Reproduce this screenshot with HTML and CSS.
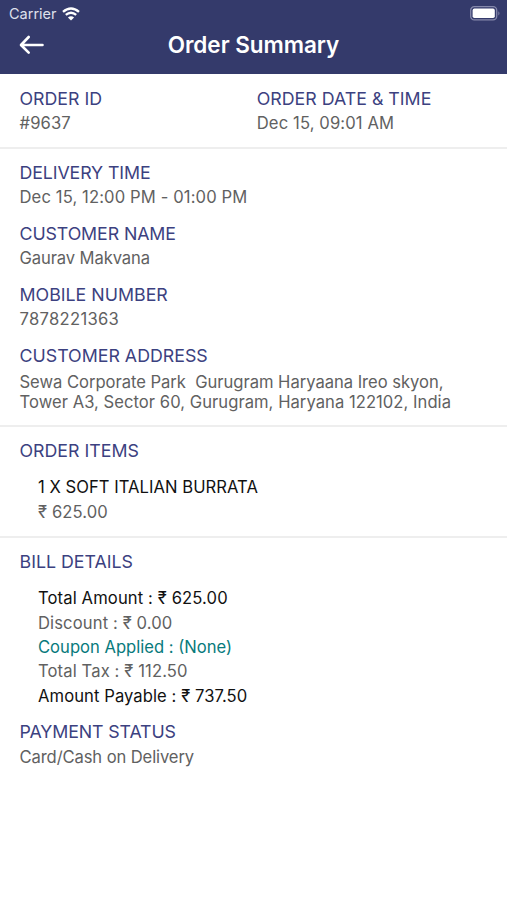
FILE: index.html
```html
<!DOCTYPE html>
<html lang="en">
<head>
<meta charset="utf-8">
<title>Order Summary</title>
<link rel="stylesheet" href="styles.css">
</head>
<body>
<header class="header">
  <div class="status">
    <span class="carrier">Carrier</span>
    <svg class="wifi" width="18" height="14" viewBox="0 0 18 14" fill="none" stroke="#fff" stroke-width="2.3"><path d="M1 4.9Q9-2 17 4.9"/><path d="M3.8 7.9Q9 3.5 14.2 7.9"/><path d="M9 13.5L5.9 10.4Q9 7.9 12.1 10.4Z" fill="#fff" stroke="none"/></svg>
    <svg class="battery" width="31" height="15" viewBox="0 0 31 15"><rect x=".7" y=".7" width="26" height="13.2" rx="3.6" fill="none" stroke="#8588ab" stroke-width="1.3"/><rect x="2.6" y="2.6" width="22.2" height="9.4" rx="1.8" fill="#fff"/><path d="M28.4 5.2Q30.5 7.3 28.4 9.4Z" fill="#8588ab"/></svg>
  </div>
  <div class="nav">
    <svg class="back" width="26" height="20" viewBox="0 0 26 20" fill="none" stroke="#fff" stroke-width="2.6" stroke-linecap="round" stroke-linejoin="round"><path d="M23.5 10H2.3M9.7 2L2 10L9.7 17.7"/></svg>
    <h1 class="title">Order Summary</h1>
  </div>
</header>
<main>
  <section class="section columns">
    <div class="field"><h2>ORDER ID</h2><p class="numeric">#9637</p></div>
    <div class="field"><h2>ORDER DATE &amp; TIME</h2><p class="numeric">Dec 15, 09:01 AM</p></div>
  </section>
  <section class="section">
    <div class="field"><h2 class="tight">DELIVERY TIME</h2><p class="numeric">Dec 15, 12:00 PM - 01:00 PM</p></div>
    <div class="field"><h2 class="tight">CUSTOMER NAME</h2><p class="tight">Gaurav Makvana</p></div>
    <div class="field"><h2>MOBILE NUMBER</h2><p class="numeric phone">7878221363</p></div>
    <div class="field"><h2>CUSTOMER ADDRESS</h2><p class="address"><span class="street">Sewa Corporate Park&nbsp; Gurugram Haryaana Ireo skyon,</span><br><span class="city">Tower A3, Sector 60, Gurugram, Haryana 122102, India</span></p></div>
  </section>
  <section class="section">
    <h2>ORDER ITEMS</h2>
    <div class="list"><p class="strong item">1 X SOFT ITALIAN BURRATA</p><p class="numeric">₹ 625.00</p></div>
  </section>
  <section class="section">
    <h2>BILL DETAILS</h2>
    <div class="list">
      <p class="strong numeric">Total Amount : ₹ 625.00</p>
      <p class="numeric">Discount : ₹ 0.00</p>
      <p class="coupon">Coupon Applied : (None)</p>
      <p class="numeric">Total Tax : ₹ 112.50</p>
      <p class="strong payable">Amount Payable : ₹ 737.50</p>
    </div>
    <div class="field payment"><h2 class="tight">PAYMENT STATUS</h2><p class="tight">Card/Cash on Delivery</p></div>
  </section>
</main>
</body>
</html>
```
FILE: styles.css
```css
* { box-sizing: border-box; }
body { margin: 0; background: #fff; font-family: Inter, "Liberation Sans", sans-serif; color: #616161; }
h1, h2, p { margin: 0; }
.header { height: 74px; background: #343a6b; color: #fff; }
.status { height: 27px; display: flex; align-items: center; padding: 0 6px 0 9px; }
.carrier { font-size: 14.5px; color: #dfe0ec; }
.wifi { margin-left: 5.5px; }
.battery { margin-left: auto; }
.nav { height: 36px; display: grid; grid-template-columns: 60px 1fr 60px; align-items: center; }
.back { margin-left: 19px; }
.title { text-align: center; font-size: 22.5px; font-weight: 600; letter-spacing: -.03px; padding-bottom: 2px; }
.section { padding: 12px 19.5px 11.4px; border-bottom: 2px solid #eee; display: grid; gap: 12.2px; }
.section:first-child { padding-top: 13px; padding-bottom: 11px; }
.section:last-child { border: 0; }
.columns { grid-template-columns: 1fr 1fr; column-gap: 6.5px; }
h2 { font-size: 17.8px; line-height: 24.4px; font-weight: 400; color: #3c4180; }
p { font-size: 16.6px; line-height: 24.4px; }
.tight { letter-spacing: -.11px; }
.numeric { letter-spacing: .12px; }
.phone { letter-spacing: .3px; }
.payable { letter-spacing: .08px; }
.address { line-height: 20.4px; padding: 3.4px 0 1px; white-space: nowrap; }
.street { letter-spacing: -.03px; }
.city { letter-spacing: .04px; }
.item { letter-spacing: .04px; }
.list { padding-left: 18.5px; }
.strong { color: #111; }
.coupon { color: #087a7c; }
```
